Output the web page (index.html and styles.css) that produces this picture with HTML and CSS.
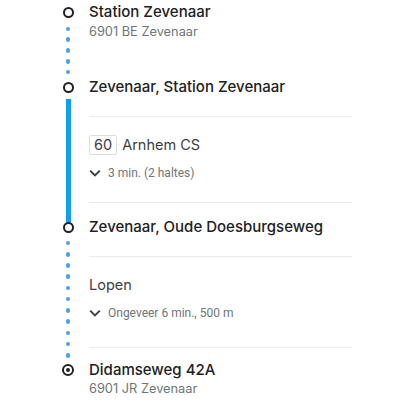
FILE: index.html
```html
<!DOCTYPE html>
<html lang="nl">
<head>
<meta charset="utf-8">
<title>Route</title>
<link rel="stylesheet" href="styles.css">
</head>
<body>
<div class="route">
  <section class="leg leg-first">
    <div class="rail">
      <span class="node"><span class="ring"></span></span>
      <span class="line dotted"><i></i><i></i><i></i><i></i><i></i></span>
    </div>
    <div class="body">
      <div class="stop-title">Station Zevenaar</div>
      <div class="stop-sub">6901 BE Zevenaar</div>
    </div>
  </section>

  <section class="leg leg-transit">
    <div class="rail">
      <span class="node"><span class="ring"></span></span>
      <span class="line solid"></span>
    </div>
    <div class="body">
      <div class="stop-title">Zevenaar, Station Zevenaar</div>
      <div class="detail detail-transit">
        <div class="route-line"><span class="badge">60</span><span class="headsign">Arnhem CS</span></div>
        <div class="expand">
          <svg class="chev" width="14" height="16" viewBox="0 0 14 16"><path d="M2.2 5.6 L7 10.4 L11.8 5.6" fill="none" stroke="#3c4043" stroke-width="2"/></svg>
          <span>3 min. (2 haltes)</span>
        </div>
      </div>
    </div>
  </section>

  <section class="leg leg-walk">
    <div class="rail">
      <span class="node node-from-transit"><span class="ring"></span></span>
      <span class="line dotted"><i></i><i></i><i></i><i></i><i></i><i></i><i></i><i></i><i></i><i></i><i></i></span>
    </div>
    <div class="body">
      <div class="stop-title">Zevenaar, Oude Doesburgseweg</div>
      <div class="detail detail-walk">
        <div class="mode">Lopen</div>
        <div class="expand">
          <svg class="chev" width="14" height="16" viewBox="0 0 14 16"><path d="M2.2 5.6 L7 10.4 L11.8 5.6" fill="none" stroke="#3c4043" stroke-width="2"/></svg>
          <span>Ongeveer 6 min., 500 m</span>
        </div>
      </div>
    </div>
  </section>

  <section class="leg leg-last">
    <div class="rail">
      <span class="node"><span class="ring ring-target"><span class="core"></span></span></span>
    </div>
    <div class="body">
      <div class="stop-title">Didamseweg 42A</div>
      <div class="stop-sub">6901 JR Zevenaar</div>
    </div>
  </section>
</div>
</body>
</html>
```

FILE: styles.css
```css
html, body {
  margin: 0;
  padding: 0;
  background: #ffffff;
}

body {
  font-family: Inter, Roboto, "Liberation Sans", Arial, sans-serif;
  color: #202124;
  width: 417px;
  height: 411px;
  overflow: hidden;
}

.route {
  display: flex;
  flex-direction: column;
  padding-left: 57px;
  width: 295px;
}

.leg {
  display: grid;
  grid-template-columns: 22px 1fr;
  column-gap: 10px;
}

.rail {
  display: flex;
  flex-direction: column;
  align-items: center;
}

.node {
  height: 24px;
  width: 22px;
  display: flex;
  align-items: center;
  justify-content: center;
  flex: none;
}

.node-from-transit {
  background: linear-gradient(#0f9ff0, #0f9ff0) center top / 5px 50% no-repeat;
}

.ring {
  box-sizing: border-box;
  width: 11px;
  height: 11px;
  border: 2.4px solid #202124;
  border-radius: 50%;
  background: #ffffff;
  display: flex;
  align-items: center;
  justify-content: center;
}

.ring-target {
  width: 12px;
  height: 12px;
  border-width: 2px;
}

.core {
  width: 4px;
  height: 4px;
  border-radius: 50%;
  background: #202124;
}

.line {
  flex: 1;
  width: 6px;
}

.line.solid {
  width: 5px;
  background: #0f9ff0;
}

.line.dotted {
  display: flex;
  flex-direction: column;
  align-items: center;
  justify-content: space-between;
  padding: 2.7px 0 0.7px;
}

.line.dotted i {
  display: block;
  width: 4.6px;
  height: 4.6px;
  border-radius: 50%;
  background: #4a9ff3;
}

.leg-walk .line.dotted {
  padding: 1.7px 0 0.3px;
}

.stop-title {
  font-size: 15px;
  font-weight: 500;
  line-height: 24px;
  color: #202124;
  white-space: nowrap;
}

.stop-sub {
  font-size: 12.8px;
  line-height: 16px;
  color: #70757a;
}

.leg-first {
  height: 75px;
}

.leg-last {
  height: 40px;
}

.leg-last .stop-sub {
  line-height: 14px;
}

.detail {
  border-top: 1px solid #e8eaed;
  border-bottom: 1px solid #e8eaed;
}

.detail-transit {
  margin-top: 17px;
  padding-top: 18px;
  padding-bottom: 21px;
  margin-bottom: 12px;
}

.detail-walk {
  margin-top: 17px;
  padding-top: 16px;
  padding-bottom: 26px;
  margin-bottom: 10px;
}

.route-line {
  display: flex;
  align-items: center;
  gap: 5px;
  height: 20px;
}

.badge {
  box-sizing: border-box;
  height: 20px;
  min-width: 26px;
  padding: 0 4px;
  border: 1px solid #dadce0;
  border-radius: 2px;
  font-size: 14.5px;
  line-height: 18px;
  color: #3c4043;
  text-align: center;
}

.headsign {
  font-size: 14.5px;
  line-height: 20px;
  color: #3c4043;
}

.mode {
  font-size: 14.5px;
  line-height: 24px;
  color: #3c4043;
}

.expand {
  display: flex;
  align-items: center;
  gap: 6px;
  margin-top: 10px;
  height: 16px;
  font-family: Roboto, "Liberation Sans", Arial, sans-serif;
  font-size: 12px;
  line-height: 16px;
  color: #70757a;
  margin-left: -1px;
}

.detail-walk .expand {
  margin-top: 8px;
}

.chev {
  flex: none;
  display: block;
}
```
